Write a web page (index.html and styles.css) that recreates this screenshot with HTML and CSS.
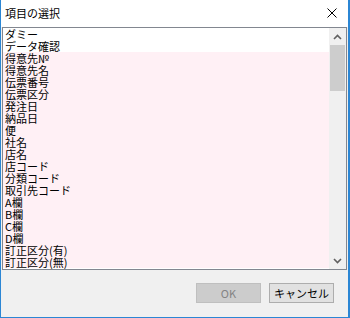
FILE: index.html
```html
<!DOCTYPE html>
<html lang="ja">
<head>
    <meta charset="UTF-8">
    <title>項目の選択</title>
    <link rel="stylesheet" href="styles.css">
</head>
<body>
    <div class="window">
        <div class="title-bar">
            <span class="title">項目の選択</span>
            <svg class="close-icon" width="10" height="10" viewBox="0 0 10 10">
                <path d="M0.5 0.5 L9.5 9.5 M9.5 0.5 L0.5 9.5" stroke="#000" stroke-width="1" fill="none"/>
            </svg>
        </div>

        <div class="list-box">
            <ul class="item-list">
                <li class="item">ダミー</li>
                <li class="item">データ確認</li>
                <li class="item marked">得意先№</li>
                <li class="item marked">得意先名</li>
                <li class="item marked">伝票番号</li>
                <li class="item marked">伝票区分</li>
                <li class="item marked">発注日</li>
                <li class="item marked">納品日</li>
                <li class="item marked">便</li>
                <li class="item marked">社名</li>
                <li class="item marked">店名</li>
                <li class="item marked">店コード</li>
                <li class="item marked">分類コード</li>
                <li class="item marked">取引先コード</li>
                <li class="item marked">A欄</li>
                <li class="item marked">B欄</li>
                <li class="item marked">C欄</li>
                <li class="item marked">D欄</li>
                <li class="item marked">訂正区分(有)</li>
                <li class="item marked">訂正区分(無)</li>
            </ul>
            <div class="scrollbar">
                <div class="scroll-arrow">
                    <svg width="9" height="6" viewBox="0 0 9 6">
                        <path d="M1 5 L4.5 1.5 L8 5" stroke="#606060" stroke-width="1.6" fill="none"/>
                    </svg>
                </div>
                <div class="scroll-track">
                    <div class="scroll-thumb"></div>
                </div>
                <div class="scroll-arrow">
                    <svg width="9" height="6" viewBox="0 0 9 6">
                        <path d="M1 1 L4.5 4.5 L8 1" stroke="#606060" stroke-width="1.6" fill="none"/>
                    </svg>
                </div>
            </div>
        </div>

        <div class="footer">
            <button class="dialog-button" disabled>OK</button>
            <button class="dialog-button">キャンセル</button>
        </div>
    </div>
</body>
</html>
```

FILE: styles.css
```css
:root {
    --window-border: #2b86d4;
    --face: #f0f0f0;
    --list-border: #828790;
    --marked: #fff0f5;
    --thumb: #cdcdcd;
}

* {
    margin: 0;
    padding: 0;
    box-sizing: border-box;
}

body {
    width: 350px;
    height: 318px;
    overflow: hidden;
    font-family: "Noto Sans CJK JP", "Liberation Sans", sans-serif;
    color: #000;
    background-color: #fff;
}

.window {
    display: flex;
    flex-direction: column;
    width: 350px;
    height: 318px;
    border-left: 1px solid var(--window-border);
    border-right: 2px solid var(--window-border);
    border-bottom: 1px solid var(--window-border);
    background-color: var(--face);
}

.title-bar {
    display: flex;
    align-items: center;
    justify-content: space-between;
    height: 27px;
    padding: 0 11px 1px 4px;
    background-color: #fff;
}

.title {
    font-size: 11px;
    line-height: 14px;
}

.close-icon {
    display: block;
}

.list-box {
    display: flex;
    height: 243px;
    margin: 0 1px;
    border: 1px solid var(--list-border);
    background-color: #fff;
}

.item-list {
    flex: 1;
    list-style: none;
    overflow: hidden;
}

.item {
    height: 12px;
    padding-left: 2px;
    font-size: 11px;
    line-height: 12px;
    white-space: nowrap;
}

.marked {
    background-color: var(--marked);
}

.scrollbar {
    display: flex;
    flex-direction: column;
    width: 17px;
    background-color: var(--face);
}

.scroll-arrow {
    display: flex;
    align-items: center;
    justify-content: center;
    height: 17px;
}

.scroll-track {
    flex: 1;
    padding: 0 1px;
}

.scroll-thumb {
    height: 46px;
    background-color: var(--thumb);
}

.footer {
    display: flex;
    justify-content: flex-end;
    align-items: flex-start;
    gap: 8px;
    flex: 1;
    padding: 13px 14px 0 0;
}

.dialog-button {
    width: 65px;
    height: 20px;
    border: 1px solid #adadad;
    background-color: #e1e1e1;
    font-family: "Noto Sans CJK JP", "Liberation Sans", sans-serif;
    font-size: 11px;
    line-height: 16px;
    color: #000;
}

.dialog-button:disabled {
    border-color: #bfbfbf;
    background-color: #cccccc;
    color: #838383;
}
```
